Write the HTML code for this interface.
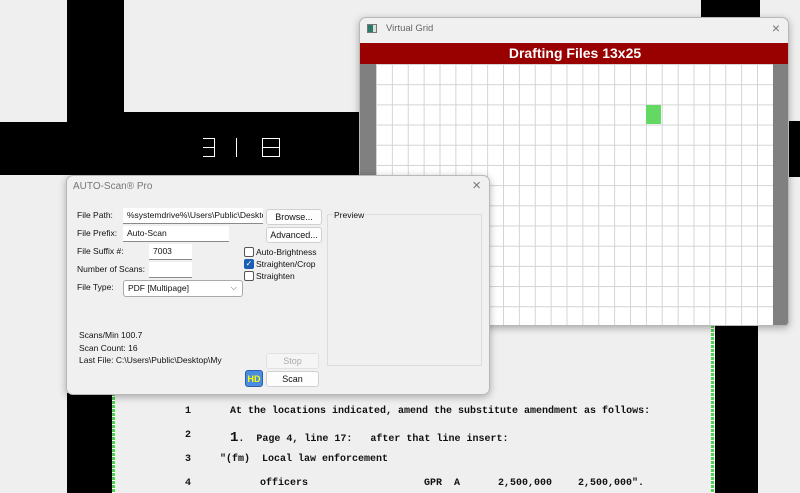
<!DOCTYPE html>
<html><head><meta charset="utf-8"><style>
*{margin:0;padding:0;box-sizing:border-box}
body{width:800px;height:493px;overflow:hidden;background:#efefef;position:relative;font-family:"Liberation Sans",sans-serif;font-size:9px;color:#111}
.abs{position:absolute}
.blk{position:absolute;background:#000}
.gd{position:absolute;width:3px;background:repeating-linear-gradient(#4fd04f 0 3px,#fff 3px 4px)}
.doc{position:absolute;font-family:"Liberation Mono",monospace;font-weight:bold;font-size:10px;color:#111;white-space:pre}
.win{position:absolute;background:#f0f0f0;border:1px solid #b8b8b8;border-radius:7px;box-shadow:0 2px 8px rgba(0,0,0,.3);overflow:hidden}
.inp{position:absolute;background:#fff;border-bottom:1px solid #8a8a8a;height:16px;padding:2px 4px;font-size:8.5px;white-space:nowrap;overflow:hidden}
.btn{position:absolute;background:#fdfdfd;border:1px solid #d0d0d0;border-radius:3px;height:16px;text-align:center;font-size:9px;line-height:14px}
.lbl{position:absolute;font-size:8.5px}
.cb{position:absolute;width:10px;height:10px;border:1px solid #555;border-radius:2px;background:#fff}
.seg{position:absolute;border:1px solid #fff}
</style></head><body>
<div class="blk" style="left:67px;top:0;width:57px;height:125px"></div>
<div class="blk" style="left:0;top:122px;width:360px;height:53px"></div>
<div class="blk" style="left:111px;top:112px;width:250px;height:12px"></div>
<div class="blk" style="left:701px;top:0;width:59px;height:18px"></div>
<div class="blk" style="left:788px;top:121px;width:12px;height:56px"></div>
<!-- 3 1 8 outlined digits -->
<div class="seg" style="left:203px;top:138px;width:12px;height:19px;border-left:none"></div>
<div class="abs" style="left:203px;top:147px;width:12px;height:1px;background:#fff"></div>
<div class="abs" style="left:236px;top:138px;width:1px;height:19px;background:#fff"></div>
<div class="seg" style="left:262px;top:138px;width:18px;height:19px"></div>
<div class="abs" style="left:262px;top:147px;width:18px;height:1px;background:#fff"></div>
<div class="blk" style="left:67px;top:393px;width:45px;height:100px"></div>
<div class="gd" style="left:112px;top:393px;height:100px"></div>
<div class="blk" style="left:715px;top:325px;width:43px;height:168px"></div>
<div class="gd" style="left:711px;top:325px;height:168px"></div>
<div class="doc" style="left:185px;top:406px">1</div>
<div class="doc" style="left:230px;top:406px">At the locations indicated, amend the substitute amendment as follows:</div>
<div class="doc" style="left:185px;top:430px">2</div>
<div class="doc" style="left:230px;top:430px"><span style="font-size:14px">1</span>.  Page 4, line 17:   after that line insert:</div>
<div class="doc" style="left:185px;top:454px">3</div>
<div class="doc" style="left:220px;top:454px">"(fm)  Local law enforcement</div>
<div class="doc" style="left:185px;top:478px">4</div>
<div class="doc" style="left:260px;top:478px">officers</div>
<div class="doc" style="left:424px;top:478px">GPR  A</div>
<div class="doc" style="left:498px;top:478px">2,500,000</div>
<div class="doc" style="left:578px;top:478px">2,500,000".</div>

<div class="win" style="left:359px;top:17px;width:430px;height:309px;border-radius:7px 7px 4px 4px">
 <div class="abs" style="left:7px;top:6px;width:10px;height:9px;border:1px solid #777;background:linear-gradient(90deg,#2a7a6a 0 5px,#ddd 5px)"></div>
 <div class="abs" style="left:26px;top:5px;font-size:9.5px;color:#666">Virtual Grid</div>
 <div class="abs" style="right:8px;top:2px;font-size:14px;color:#777">×</div>
 <div class="abs" style="left:0;top:25px;width:430px;height:21px;background:#990000;color:#fff;font-weight:bold;font-size:14px;text-align:center;line-height:21px">Drafting Files 13x25</div>
 <div class="abs" style="left:0;top:46px;width:430px;height:263px;background:#808080"></div>
 <div class="abs" style="left:16px;top:46px;width:397px;height:263px;background-color:#fff;background-image:linear-gradient(90deg,#d4d4d4 1px,transparent 1px),linear-gradient(#d4d4d4 1px,transparent 1px);background-size:15.88px 20.2px"></div>
 <div class="abs" style="left:286px;top:87px;width:15px;height:19px;background:#63d863"></div>
</div>

<div class="win" style="left:66px;top:175px;width:424px;height:220px">
 <div class="abs" style="left:6px;top:5px;font-size:10px;color:#777">AUTO-Scan® Pro</div>
 <div class="abs" style="right:8px;top:1px;font-size:15px;color:#777">×</div>
 <div class="lbl" style="left:10px;top:34px">File Path:</div>
 <div class="inp" style="left:56px;top:32px;width:140px">%systemdrive%\Users\Public\Desktop</div>
 <div class="btn" style="left:199px;top:33px;width:56px">Browse...</div>
 <div class="lbl" style="left:10px;top:52px">File Prefix:</div>
 <div class="inp" style="left:56px;top:50px;width:106px">Auto-Scan</div>
 <div class="btn" style="left:199px;top:51px;width:56px">Advanced...</div>
 <div class="lbl" style="left:10px;top:70px">File Suffix #:</div>
 <div class="inp" style="left:82px;top:68px;width:43px">7003</div>
 <div class="lbl" style="left:10px;top:88px">Number of Scans:</div>
 <div class="inp" style="left:82px;top:86px;width:43px"></div>
 <div class="lbl" style="left:10px;top:106px">File Type:</div>
 <div class="inp" style="left:56px;top:104px;width:120px;height:17px;border:1px solid #aaa;border-radius:3px">PDF [Multipage]<span style="position:absolute;right:5px;top:1px;color:#555">⌵</span></div>
 <div class="cb" style="left:177px;top:71px"></div><div class="lbl" style="left:189px;top:71px">Auto-Brightness</div>
 <div class="cb" style="left:177px;top:83px;background:#1a5fb4;border-color:#1a5fb4;color:#fff;font-size:8px;line-height:8px;text-align:center">✓</div><div class="lbl" style="left:189px;top:83px">Straighten/Crop</div>
 <div class="cb" style="left:177px;top:95px"></div><div class="lbl" style="left:189px;top:95px">Straighten</div>
 <div class="abs" style="left:260px;top:38px;width:155px;height:152px;border:1px solid #dcdcdc"></div>
 <div class="lbl" style="left:266px;top:34px;background:#f0f0f0;padding:0 1px">Preview</div>
 <div class="lbl" style="left:12px;top:154px">Scans/Min 100.7</div>
 <div class="lbl" style="left:12px;top:167px">Scan Count: 16</div>
 <div class="lbl" style="left:12px;top:179px">Last File: C:\Users\Public\Desktop\My</div>
 <div class="btn" style="left:199px;top:177px;width:53px;color:#aaa;background:#f5f5f5;border-color:#e2e2e2">Stop</div>
 <div class="btn" style="left:199px;top:195px;width:53px">Scan</div>
 <div class="abs" style="left:178px;top:194px;width:18px;height:17px;background:#4a8de0;border-radius:3px;color:#ff0;font-weight:bold;font-size:9px;line-height:17px;text-align:center;border:1px solid #2a5fb0">HD</div>
</div>
</body></html>
